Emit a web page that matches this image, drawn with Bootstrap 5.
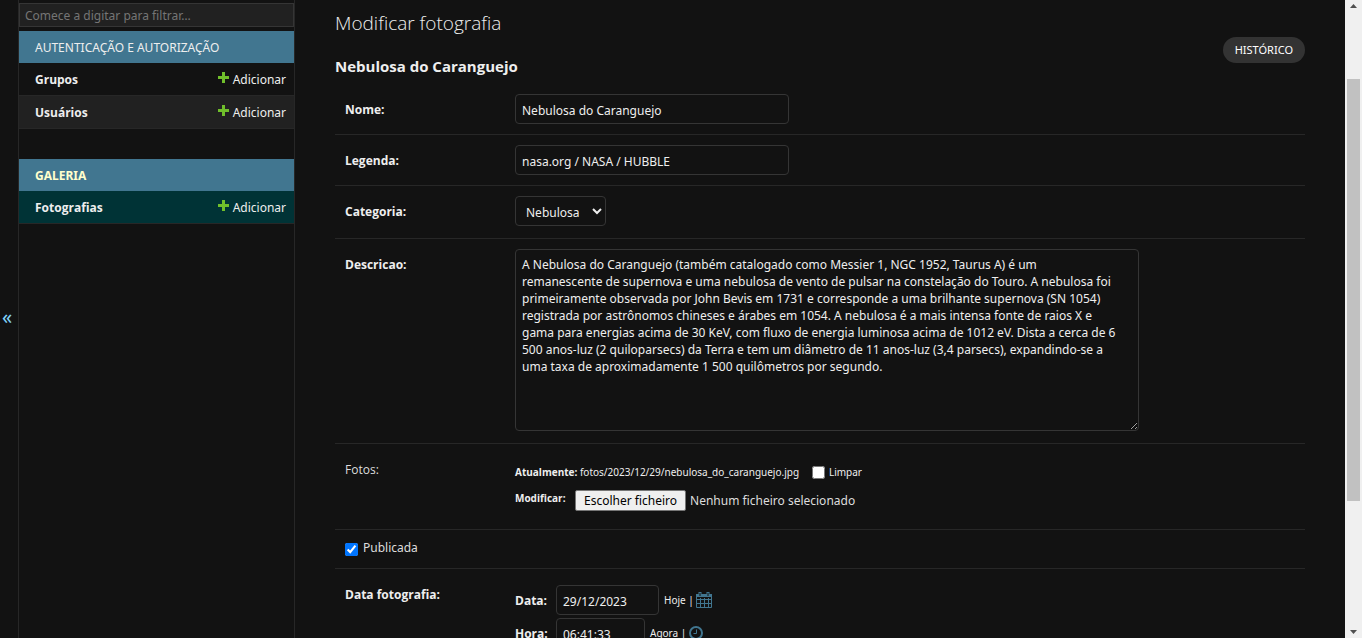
<!DOCTYPE html>
<html lang="pt">
<head>
<meta charset="utf-8">
<meta name="viewport" content="width=device-width, initial-scale=1">
<title>Modificar fotografia</title>
<link href="https://cdn.jsdelivr.net/npm/bootstrap@5.3.0/dist/css/bootstrap.min.css" rel="stylesheet">
<style>
:root { --hairline: #272727; --edge: #353535; --bar: #417690; }
body { background: #121212; color: #eee; font: 12px/18px "Noto Sans", "Open Sans", sans-serif; }
a { color: inherit; text-decoration: none; }
/* sidebar */
.nav-toggle { width: 19px; background: none; border: 0; border-right: 1px solid var(--hairline); color: #81d4fa; font-size: 20px; padding: 0 4px 4px 0; }
.side-nav { width: 276px; border-right: 1px solid var(--hairline); }
.side-filter { height: 24px; margin: 3px 0 4px; padding: 0 5px; background: #212121; border: 1px solid var(--edge); color: #eee; font-size: 12px; }
.side-filter::placeholder { color: #757575; }
.app-title { background: var(--bar); height: 32px; padding: 2px 16px 0; font-size: 12px; font-weight: 400; margin: 0; }
.app-title.current { color: #ffc; font-weight: 700; }
.model-row { height: 33px; padding: 1px 8px 0 16px; border-bottom: 1px solid var(--hairline); }
.model-row b { font-family: "Open Sans", sans-serif; font-weight: 700; }
.model-row.striped { background: #212121; }
.model-row.current { background: #003336; }
.model-row svg { margin-top: 1px; }
.model-gap { margin-top: 30px; }
/* form */
.page-title { font: 300 19px/26px "Open Sans", sans-serif; color: #eee; margin: 10px 0 20px; }
.object-title { font: 700 15px/20px "Open Sans", sans-serif; margin: 0 0 8px; }
.history { background: #333; color: #fff; border-radius: 13px; padding: 4px 12px; font-size: 11px; margin-top: 37px; }
.main-col { padding: 0 40px; }
.form-line { padding: 10px; border-bottom: 1px solid var(--hairline); }
.form-line.tall { padding-bottom: 12px; }
.field-name { width: 170px; padding-top: 7px; font: 700 12px/18px "Open Sans", sans-serif; }
.field-name.optional { font-weight: 400; color: #ddd; }
.field { background: #121212; color: #eee; border: 1px solid var(--edge); border-radius: 4px; padding: 2px 6px 0; height: 30px; font-size: 12px; }
.field-text { width: 274px; }
.field-select { width: 91px; }
.field-date { width: 103px; }
.field-time { width: 89px; }
textarea.field { width: 624px; height: 182px; padding: 6px 21px 6px 6px; line-height: 17px; color-scheme: dark; }
.small-line { font-size: 10px; line-height: 16px; }
.small-line b { font-family: "Open Sans", sans-serif; }
.photo-line { padding-bottom: 18px; }
.photo-body { padding-top: 10px; }
.new-file { margin-top: 10px; }
.new-file b { width: 60px; }
.file-path { width: 232px; }
.tick { width: 13px; height: 13px; margin: 0; }
.tick-line { padding: 9px 10px 11px; }
.tick-line .tick { margin-top: 4px; }
.pick-file { background: #efefef; color: #000; border: 1px solid #767676; border-radius: 2px; padding: 0 8px; margin-right: 4px; height: 21px; line-height: 18px; font-size: 12px; }
.file-state { font-size: 12px; line-height: 21px; color: #ddd; }
.tick-name { color: #ddd; margin-left: 5px; }
.date-body { padding-top: 6px; gap: 3px; }
.date-name { width: 41px; padding-top: 2px; font: 700 12px/18px "Open Sans", sans-serif; }
.stamp { margin-left: 5px; }
/* scroll strip */
.scroll-strip { width: 17px; background: #f0f0f0; }
.scroll-thumb { width: 13px; background: #c1c1c1; flex: 422; }
.scroll-before { flex: 71; }
.scroll-after { flex: 129; }
</style>
</head>
<body>
<div class="d-flex vh-100 overflow-hidden">
  <button class="nav-toggle flex-shrink-0" type="button" aria-label="Alternar navegação">«</button>

  <nav class="side-nav flex-shrink-0">
    <input class="side-filter d-block w-100" type="search" placeholder="Comece a digitar para filtrar…" aria-label="Filtrar navegação">
    <h2 class="app-title d-flex align-items-center"><a href="#">AUTENTICAÇÃO E AUTORIZAÇÃO</a></h2>
    <div class="model-row d-flex align-items-center justify-content-between"><a href="#"><b>Grupos</b></a><a class="d-flex gap-1" href="#"><svg width="11" height="11" viewBox="0 0 11 11"><path d="M4 0h3v4h4v3H7v4H4V7H0V4h4z" fill="#70bf2b"/></svg>Adicionar</a></div>
    <div class="model-row striped d-flex align-items-center justify-content-between"><a href="#"><b>Usuários</b></a><a class="d-flex gap-1" href="#"><svg width="11" height="11" viewBox="0 0 11 11"><path d="M4 0h3v4h4v3H7v4H4V7H0V4h4z" fill="#70bf2b"/></svg>Adicionar</a></div>
    <h2 class="app-title current model-gap d-flex align-items-center"><a href="#">GALERIA</a></h2>
    <div class="model-row current d-flex align-items-center justify-content-between"><a href="#"><b>Fotografias</b></a><a class="d-flex gap-1" href="#"><svg width="11" height="11" viewBox="0 0 11 11"><path d="M4 0h3v4h4v3H7v4H4V7H0V4h4z" fill="#70bf2b"/></svg>Adicionar</a></div>
  </nav>

  <main class="main-col flex-grow-1 overflow-hidden">
    <div class="d-flex justify-content-between align-items-start">
      <div>
        <h1 class="page-title">Modificar fotografia</h1>
        <h2 class="object-title">Nebulosa do Caranguejo</h2>
      </div>
      <a class="history" href="#">HISTÓRICO</a>
    </div>
    <form>
      <div class="form-line d-flex align-items-start">
        <label class="field-name" for="nome">Nome:</label>
        <input class="field field-text" id="nome" type="text" value="Nebulosa do Caranguejo">
      </div>
      <div class="form-line d-flex align-items-start">
        <label class="field-name" for="legenda">Legenda:</label>
        <input class="field field-text" id="legenda" type="text" value="nasa.org / NASA / HUBBLE">
      </div>
      <div class="form-line tall d-flex align-items-start">
        <label class="field-name" for="categoria">Categoria:</label>
        <select class="field field-select" id="categoria"><option>Nebulosa</option></select>
      </div>
      <div class="form-line tall d-flex align-items-start">
        <label class="field-name" for="descricao">Descricao:</label>
        <textarea class="field" id="descricao" spellcheck="false">A Nebulosa do Caranguejo (também catalogado como Messier 1, NGC 1952, Taurus A) é um remanescente de supernova e uma nebulosa de vento de pulsar na constelação do Touro. A nebulosa foi primeiramente observada por John Bevis em 1731 e corresponde a uma brilhante supernova (SN 1054) registrada por astrônomos chineses e árabes em 1054. A nebulosa é a mais intensa fonte de raios X e gama para energias acima de 30 KeV, com fluxo de energia luminosa acima de 1012 eV. Dista a cerca de 6 500 anos-luz (2 quiloparsecs) da Terra e tem um diâmetro de 11 anos-luz (3,4 parsecs), expandindo-se a uma taxa de aproximadamente 1 500 quilômetros por segundo.</textarea>
      </div>
      <div class="form-line photo-line d-flex align-items-start">
        <label class="field-name optional" for="foto">Fotos:</label>
        <div class="photo-body small-line">
          <div class="d-flex align-items-center"><b>Atualmente:</b>&nbsp;<a class="file-path" href="#">fotos/2023/12/29/nebulosa_do_caranguejo.jpg</a><input class="tick me-1" type="checkbox" id="limpar"><label for="limpar">Limpar</label></div>
          <div class="new-file d-flex"><b>Modificar:</b><input class="d-none" type="file" id="foto"><button class="pick-file" type="button" onclick="document.getElementById('foto').click()">Escolher ficheiro</button><span class="file-state">Nenhum ficheiro selecionado</span></div>
        </div>
      </div>
      <div class="form-line tick-line d-flex">
        <input class="tick" type="checkbox" id="publicada" checked><label class="tick-name" for="publicada">Publicada</label>
      </div>
      <div class="form-line d-flex align-items-start">
        <span class="field-name">Data fotografia:</span>
        <div class="date-body d-flex flex-column">
          <div class="d-flex align-items-center small-line"><label class="date-name" for="data">Data:</label><input class="field field-date" id="data" type="text" value="29/12/2023"><a class="stamp" href="#">Hoje</a>&nbsp;|&nbsp;<a class="d-flex" href="#" aria-label="Calendário"><svg width="16" height="16" viewBox="0 0 16 16" fill="none" stroke="#417690"><path d="M.5 3v12.500h15V3z"/><path d="M0 7.500h16M0 11.500h16M4.500 6v10M8.500 6v10M12.500 6v10"/><path d="M0 3.500h16" stroke-width="3"/><path d="M4 0v4M12 0v4" stroke-width="3"/><path d="M4 1v3M12 1v3" stroke="#121212"/></svg></a></div>
          <div class="d-flex align-items-center small-line"><label class="date-name" for="hora">Hora:</label><input class="field field-time" id="hora" type="text" value="06:41:33"><a class="stamp" href="#">Agora</a>&nbsp;|&nbsp;<a class="d-flex" href="#" aria-label="Relógio"><svg width="14" height="14" viewBox="0 0 14 14" fill="none" stroke="#417690"><circle cx="7" cy="7" r="6" stroke-width="2"/><path d="M7.500 3.500v4H4.500"/></svg></a></div>
        </div>
      </div>
    </form>
  </main>

  <div class="scroll-strip flex-shrink-0 d-flex flex-column align-items-center py-1" aria-hidden="true">
    <svg width="7" height="4" viewBox="0 0 7 4"><path d="M0 4 3.500 0 7 4z" fill="#505050"/></svg>
    <span class="scroll-before"></span><span class="scroll-thumb"></span><span class="scroll-after"></span>
    <svg width="7" height="4" viewBox="0 0 7 4"><path d="M0 0 3.500 4 7 0z" fill="#505050"/></svg>
  </div>
</div>
<script src="https://cdn.jsdelivr.net/npm/bootstrap@5.3.0/dist/js/bootstrap.bundle.min.js"></script>
</body>
</html>
